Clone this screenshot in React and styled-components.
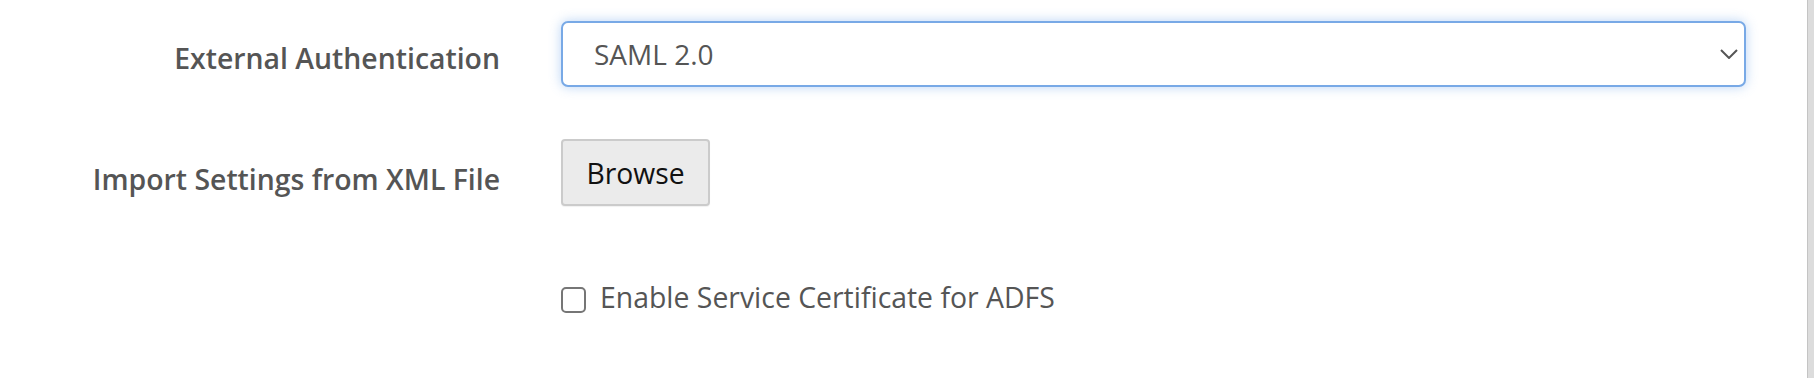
import React, { useState } from "react";
import styled, { createGlobalStyle } from "styled-components";

const GlobalStyle = createGlobalStyle`
  html, body {
    margin: 0;
    padding: 0;
    background: #fff;
  }
  body {
    font-family: "Open Sans", "Liberation Sans", sans-serif;
  }
`;

const Page = styled.div`
  display: flex;
  height: 378px;
  overflow: hidden;
`;

const Form = styled.form`
  flex: 1;
  display: flex;
  flex-direction: column;
  padding: 21px 61px 0 0;
`;

const Row = styled.div`
  display: grid;
  grid-template-columns: 500px 1fr;
  column-gap: 61px;
  align-items: center;
  margin-bottom: ${(p) => p.$gap || 0}px;
`;

const Label = styled.label`
  padding-top: ${(p) => p.$offset || 0}px;
  text-align: right;
  font-size: 28.4px;
  font-weight: 600;
  color: #555;
  white-space: nowrap;
`;

const SelectBox = styled.div`
  position: relative;
  select {
    width: 100%;
    height: 66px;
    box-sizing: border-box;
    appearance: none;
    padding: 0 40px 0 31px;
    font-family: "Open Sans", "Liberation Sans", sans-serif;
    font-size: 28px;
    color: #555;
    background: #fff;
    border: 2px solid #78a9e6;
    border-radius: 7px;
    box-shadow: 0 0 12px rgba(102, 160, 233, 0.45);
    outline: none;
  }
  svg {
    position: absolute;
    right: 8px;
    top: 50%;
    transform: translateY(-50%);
    pointer-events: none;
  }
`;

const BrowseButton = styled.button`
  justify-self: start;
  width: 149px;
  height: 67px;
  box-sizing: border-box;
  padding: 0;
  font-family: "Open Sans", "Liberation Sans", sans-serif;
  font-size: 28.3px;
  color: #111;
  background: #ebebeb;
  border: 2px solid #cbcbcb;
  border-radius: 4px;
  box-shadow: 0 1px 1px rgba(0, 0, 0, 0.06);
  cursor: pointer;
`;

const CheckRow = styled.label`
  display: flex;
  align-items: center;
  gap: 14px;
  font-size: 28.4px;
  color: #555;
  cursor: pointer;
  input {
    appearance: none;
    margin: 6px 0 0;
    flex-shrink: 0;
    width: 25px;
    height: 26px;
    box-sizing: border-box;
    border: 2px solid #767676;
    border-radius: 5px;
    background: #fff;
  }
`;

const Scrollbar = styled.div`
  width: 7px;
  background: #dcdcdc;
  border-left: 1px solid #c4c4c4;
  box-sizing: border-box;
`;

export default function App() {
  const [auth, setAuth] = useState("saml");
  const [adfs, setAdfs] = useState(false);

  return (
    <Page>
      <GlobalStyle />
      <Form onSubmit={(e) => e.preventDefault()}>
        <Row $gap={52}>
          <Label $offset={8}>External Authentication</Label>
          <SelectBox>
            <select value={auth} onChange={(e) => setAuth(e.target.value)}>
              <option value="none">None</option>
              <option value="saml">SAML 2.0</option>
            </select>
            <svg width="18" height="10" viewBox="0 0 18 10">
              <path d="M1 1 L9 9 L17 1" fill="none" stroke="#555" strokeWidth="2" />
            </svg>
          </SelectBox>
        </Row>

        <Row $gap={72}>
          <Label $offset={12}>Import Settings from XML File</Label>
          <BrowseButton type="button">Browse</BrowseButton>
        </Row>

        <Row>
          <div />
          <CheckRow>
            <input
              type="checkbox"
              checked={adfs}
              onChange={(e) => setAdfs(e.target.checked)}
            />
            Enable Service Certificate for ADFS
          </CheckRow>
        </Row>
      </Form>
      <Scrollbar />
    </Page>
  );
}
